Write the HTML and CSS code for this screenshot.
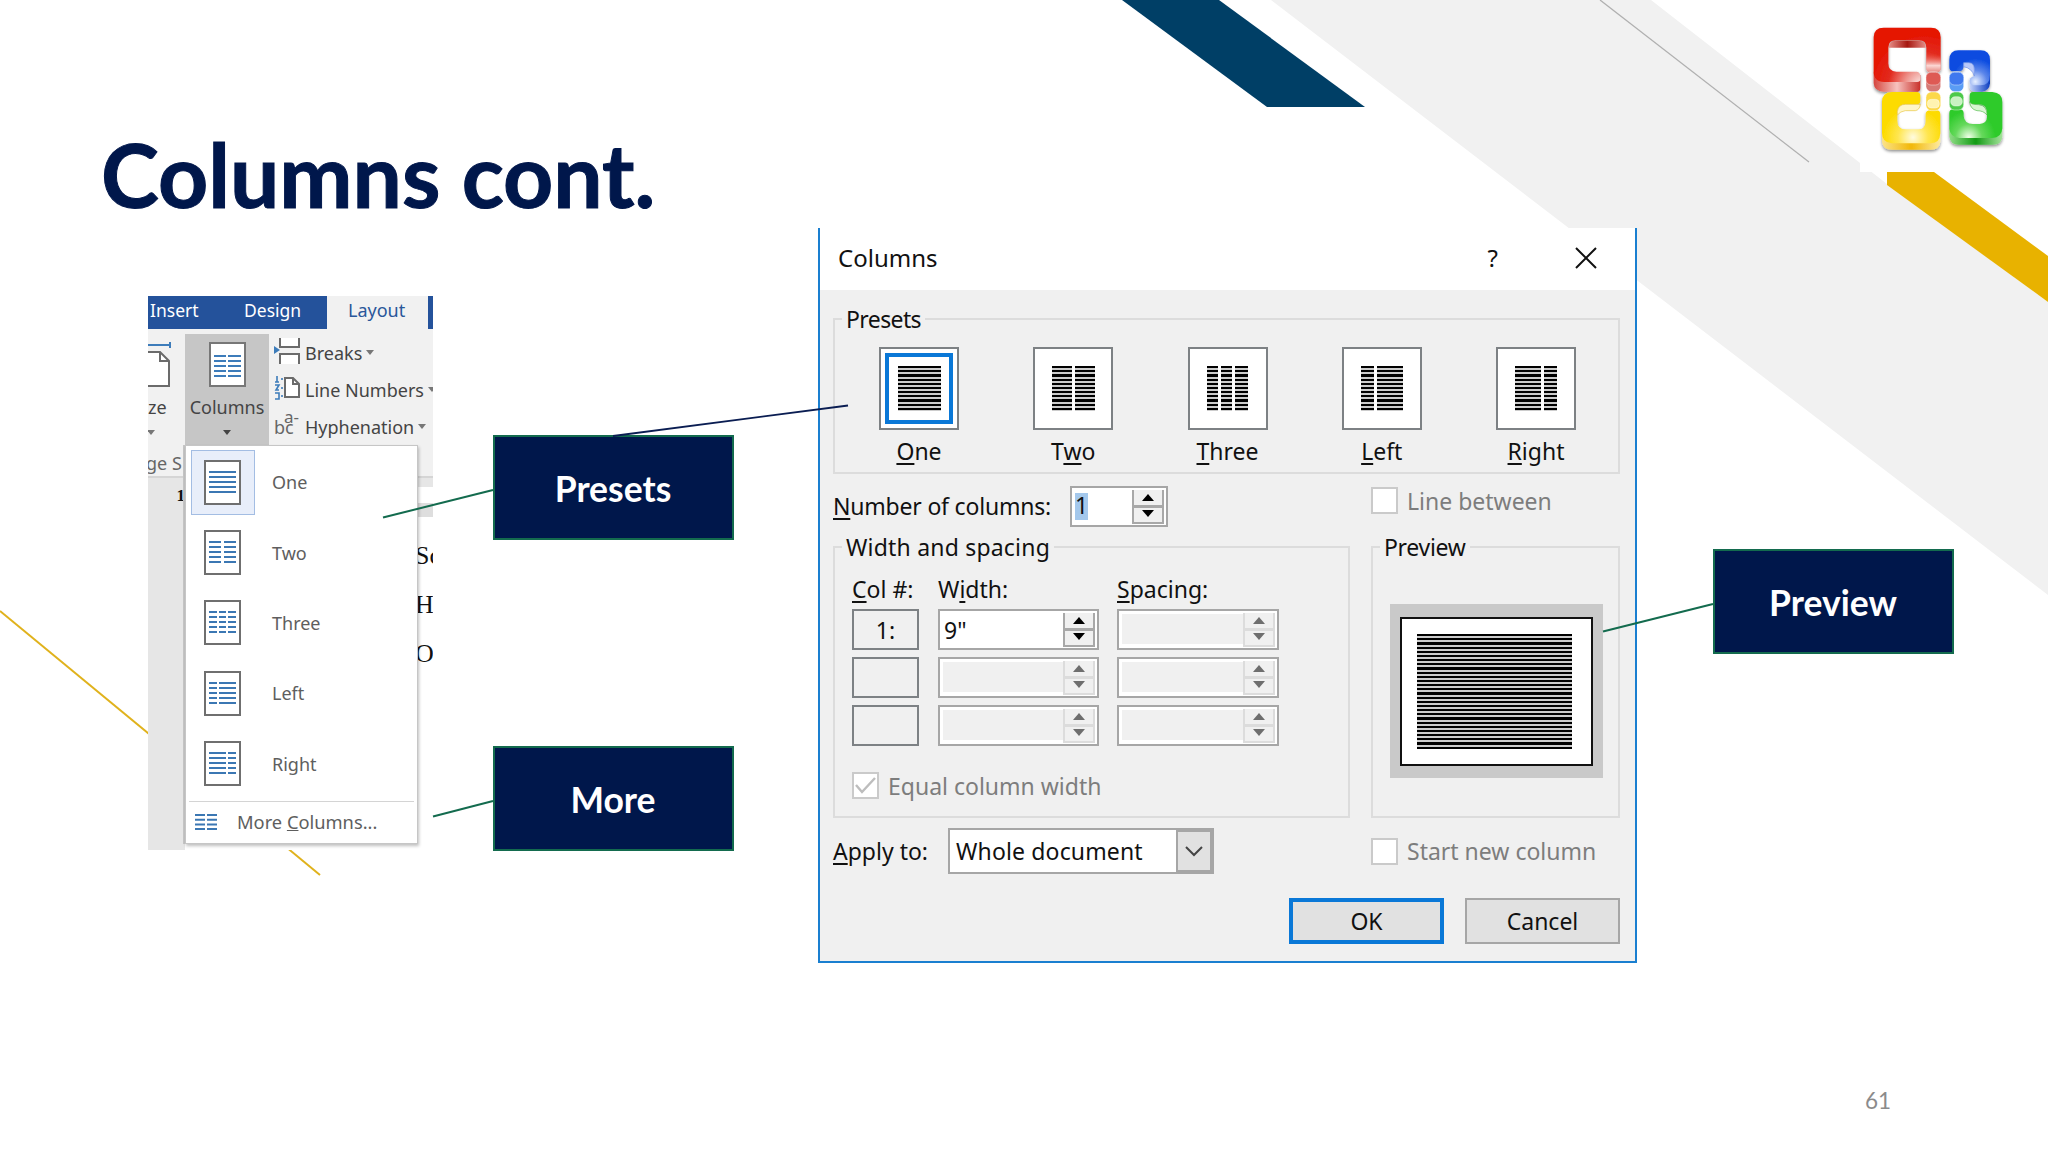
FILE: index.html
```
<!DOCTYPE html>
<html lang="en">
<head>
    <meta charset="UTF-8">
    <meta name="viewport" content="width=device-width, initial-scale=1.0">
    <title>Columns cont.</title>
    <link rel="stylesheet" href="styles.css">
</head>
<body>
<main class="slide">

    <!-- Background shapes -->
    <svg class="layer" viewBox="0 0 2048 1152">
        <polygon fill="#f1f1f1" points="1271,0 1651,0 1887,184 2048,302 2048,595"/>
        <polygon fill="#003f66" points="1122,0 1219,0 1365,107 1267,107"/>
        <rect fill="#fff" x="1860" y="0" width="188" height="172"/>
        <polygon fill="#e8b200" points="1887,172 1934,172 2048,256 2048,302 1887,185"/>
        <line stroke="#b0b0b0" stroke-width="1.3" x1="1600" y1="0" x2="1809" y2="162"/>
        <line stroke="#e0b21c" stroke-width="2" x1="0" y1="611" x2="320" y2="875"/>
    </svg>

    <h1 class="title">Columns cont.</h1>

    <!-- Office logo -->
    <svg class="logo" viewBox="80 60 430 410">
        <defs>
            <radialGradient id="red" gradientUnits="userSpaceOnUse" cx="250" cy="262" r="165">
                <stop offset="0" stop-color="#fff"/><stop offset=".35" stop-color="#ee938c"/><stop offset=".65" stop-color="#e22a1e"/><stop offset="1" stop-color="#e51400"/>
            </radialGradient>
            <radialGradient id="blue" gradientUnits="userSpaceOnUse" cx="405" cy="245" r="70">
                <stop offset="0" stop-color="#e8f0ff"/><stop offset=".5" stop-color="#5c86ea"/><stop offset="1" stop-color="#0a4be0"/>
            </radialGradient>
            <radialGradient id="yellow" gradientUnits="userSpaceOnUse" cx="218" cy="412" r="90">
                <stop offset="0" stop-color="#fffbe0"/><stop offset=".5" stop-color="#ffe650"/><stop offset="1" stop-color="#fddb00"/>
            </radialGradient>
            <radialGradient id="green" gradientUnits="userSpaceOnUse" cx="385" cy="412" r="80">
                <stop offset="0" stop-color="#f0ffe8"/><stop offset=".5" stop-color="#66d95c"/><stop offset="1" stop-color="#2ecb2b"/>
            </radialGradient>
            <linearGradient id="redSide"><stop offset="0" stop-color="#d5463f"/><stop offset=".5" stop-color="#f7c3bf"/><stop offset="1" stop-color="#c9302a"/></linearGradient>
            <linearGradient id="yellowSide"><stop offset="0" stop-color="#fbe38a"/><stop offset=".5" stop-color="#f2b807"/><stop offset="1" stop-color="#fdeaa0"/></linearGradient>
            <linearGradient id="greenSide"><stop offset="0" stop-color="#8fdd85"/><stop offset=".5" stop-color="#129a14"/><stop offset="1" stop-color="#a5e39c"/></linearGradient>
            <linearGradient id="blueSide"><stop offset="0" stop-color="#c6d5fb"/><stop offset="1" stop-color="#0b3cc0"/></linearGradient>
            <linearGradient id="redLip"><stop offset="0" stop-color="#e58a84"/><stop offset=".5" stop-color="#a51710"/><stop offset="1" stop-color="#e58a84"/></linearGradient>
            <linearGradient id="redFade" x2="0" y2="1"><stop offset=".4" stop-color="#e51400" stop-opacity="0"/><stop offset=".8" stop-color="#fbd7d4"/><stop offset="1" stop-color="#e58a84"/></linearGradient>
            <filter id="shadow" x="-10%" y="-10%" width="120%" height="120%"><feDropShadow dx="0" dy="5" stdDeviation="4" flood-opacity=".45"/></filter>
        </defs>
        <g filter="url(#shadow)">
            <!-- sides -->
            <path fill="url(#redSide)" d="M100 215V250Q102 275 130 275H232Q240 275 240 262V225H130Z"/>
            <path fill="url(#yellowSide)" d="M125 395V425Q128 449 155 449H272Q298 449 300 425V395Z"/>
            <path fill="url(#greenSide)" d="M327 385V410Q330 434 355 434H458Q484 434 486 410V385Z"/>
            <path fill="url(#blueSide)" d="M388 235V262Q390 275 405 275H425Q447 272 449 250V225Z"/>
            <!-- faces -->
            <path fill="url(#red)" d="M130 83H272Q301 83 301 112V205Q301 216 290 216H268Q258 216 258 205V143Q258 121 236 121H166Q144 121 144 143V190Q144 215 168 215H230Q240 217 240 228V238Q240 246 230 246H132Q100 246 100 214V112Q100 83 130 83Z"/>
            <path fill="url(#redFade)" d="M258 120H301V205Q301 216 290 216H268Q258 216 258 205Z"/>
            <path fill="url(#blue)" d="M355 151H420Q449 151 449 180V225Q449 256 420 256H400Q388 254 388 242Q389 232 402 228V205Q402 188 385 188H370V200Q368 214 355 214H340Q327 214 327 200V180Q327 151 355 151Z"/>
            <path fill="url(#yellow)" d="M155 276H228Q240 276 240 287V303Q240 313 228 313H195Q171 315 171 335V362Q171 388 197 388H236Q256 386 256 362V342Q257 331 270 331H288Q300 331 300 343V400Q298 430 272 430H155Q125 428 125 398V305Q125 278 155 276Z"/>
            <path fill="url(#green)" d="M398 276H456Q486 278 486 306V385Q484 414 456 414H357Q329 412 327 385V340Q327 328 338 328H360Q370 330 370 340V348Q372 372 398 372H418Q440 370 440 350V335Q438 313 415 313H398Q388 312 388 300V287Q388 276 398 276Z"/>
        </g>
        <!-- inner edges -->
        <path fill="url(#redLip)" d="M146 143Q146 122 166 122H236Q256 122 256 143Z"/>
        <path fill="#fff6c8" stroke="#e8c640" stroke-width="2" d="M171 335Q174 313 195 313H240Q238 330 225 332H195Q180 334 171 345Z"/>
        <path fill="#d9f5d2" stroke="#53bd4c" stroke-width="2" d="M388 305Q390 314 415 314Q440 316 440 345Q430 332 410 332Q390 328 388 305Z"/>
        <path fill="#b9c9fa" stroke="#6a8fea" stroke-width="2" d="M370 200V188H385Q402 188 402 210V228Q395 205 370 200Z"/>
        <!-- small beads -->
        <g stroke="#fff" stroke-opacity=".6" stroke-width="2">
            <rect fill="#d67a76" x="257" y="215" width="44" height="60" rx="16"/>
            <rect fill="#de5a54" x="257" y="217" width="44" height="38" rx="15"/>
            <rect fill="#5a9cf4" x="327" y="215" width="43" height="60" rx="16"/>
            <rect fill="#3f78ee" x="327" y="217" width="43" height="38" rx="15"/>
            <rect fill="#fcd84a" x="257" y="276" width="44" height="56" rx="16"/>
            <rect fill="#fff3b0" x="261" y="298" width="36" height="26" rx="12"/>
            <rect fill="#4cc94a" x="327" y="276" width="43" height="54" rx="16"/>
            <rect fill="#c9f2c2" x="331" y="290" width="35" height="28" rx="13"/>
        </g>
    </svg>

    <!-- Word ribbon with the Columns menu open -->
    <section class="word">
        <nav class="tabs">
            <span class="tab insert">Insert</span>
            <span class="tab design">Design</span>
            <span class="tab layout">Layout</span>
        </nav>
        <div class="ribbon">
            <div class="size">
                <svg width="24" height="46" viewBox="0 0 24 46">
                    <path d="M0 4H22M22 1V7" stroke="#3d7cba" stroke-width="2" fill="none"/>
                    <path d="M0 11H12L21 20V45H0" fill="#fff" stroke="#6b6b6b" stroke-width="2"/>
                    <path d="M12 11V20H21" fill="none" stroke="#6b6b6b" stroke-width="2"/>
                </svg>
                <span>ze</span>
                <i class="caret"></i>
                <span class="group-name">ge S</span>
            </div>
            <div class="columns-btn">
                <svg width="37" height="45" viewBox="0 0 37 45">
                    <rect x="1" y="1" width="35" height="43" fill="#fff" stroke="#777" stroke-width="2"/>
                    <path d="M5 14H17M19 14H32M5 19H17M19 19H32M5 24H17M19 24H32M5 29H17M19 29H32M5 34H17M19 34H32" stroke="#3d7cba" stroke-width="2"/>
                </svg>
                <span>Columns</span>
                <i class="caret dark"></i>
            </div>
            <ul class="tools">
                <li>
                    <svg width="27" height="26" viewBox="0 0 27 26">
                        <path d="M6 0V9H25V0M6 26V16H25V26" fill="#fff" stroke="#6b6b6b" stroke-width="2"/>
                        <path d="M0 8L6 12L0 16Z" fill="#3d7cba"/>
                    </svg>
                    Breaks<i class="caret"></i>
                </li>
                <li>
                    <svg width="27" height="26" viewBox="0 0 27 26">
                        <path d="M11 3H19L25 9V22H11Z" fill="#fff" stroke="#6b6b6b" stroke-width="2"/>
                        <path d="M19 3V9H25" fill="none" stroke="#6b6b6b" stroke-width="2"/>
                        <path d="M3 1V7M1 7H5M1 10H5L2 15H5M1 18H5V24H1M8 3V5M8 12V14M8 20V22" fill="none" stroke="#3d7cba" stroke-width="1.6"/>
                    </svg>
                    Line Numbers<i class="caret"></i>
                </li>
                <li>
                    <span class="hyphen"><sup>a-</sup>bc</span>
                    Hyphenation<i class="caret"></i>
                </li>
            </ul>
        </div>
        <div class="document">
            <div class="margin">1</div>
            <div class="ruler"></div>
            <div class="page"><p>Sc</p><p>H</p><p>O</p></div>
        </div>

        <ul class="menu">
            <li>
                <span class="pick selected"><svg width="37" height="45" viewBox="0 0 37 45"><rect class="sheet" x="1" y="1" width="35" height="43"/><path class="lines" d="M5 12H32M5 17H32M5 22H32M5 27H32M5 32H32"/></svg></span>One
            </li>
            <li>
                <span class="pick"><svg width="37" height="45" viewBox="0 0 37 45"><rect class="sheet" x="1" y="1" width="35" height="43"/><path class="lines" d="M5 12H17M20 12H32M5 17H17M20 17H32M5 22H17M20 22H32M5 27H17M20 27H32M5 32H17M20 32H32"/></svg></span>Two
            </li>
            <li>
                <span class="pick"><svg width="37" height="45" viewBox="0 0 37 45"><rect class="sheet" x="1" y="1" width="35" height="43"/><path class="lines" d="M5 12H13M15 12H22M24 12H32M5 17H13M15 17H22M24 17H32M5 22H13M15 22H22M24 22H32M5 27H13M15 27H22M24 27H32M5 32H13M15 32H22M24 32H32"/></svg></span>Three
            </li>
            <li>
                <span class="pick"><svg width="37" height="45" viewBox="0 0 37 45"><rect class="sheet" x="1" y="1" width="35" height="43"/><path class="lines" d="M5 12H13M15 12H32M5 17H13M15 17H32M5 22H13M15 22H32M5 27H13M15 27H32M5 32H13M15 32H32"/></svg></span>Left
            </li>
            <li>
                <span class="pick"><svg width="37" height="45" viewBox="0 0 37 45"><rect class="sheet" x="1" y="1" width="35" height="43"/><path class="lines" d="M5 12H22M24 12H32M5 17H22M24 17H32M5 22H22M24 22H32M5 27H22M24 27H32M5 32H22M24 32H32"/></svg></span>Right
            </li>
            <li class="more">
                <svg width="22" height="18" viewBox="0 0 22 18"><path class="lines" d="M0 2H10M12 2H22M0 6.7H10M12 6.7H22M0 11.4H10M12 11.4H22M0 16H10M12 16H22"/></svg>
                <span>More <u>C</u>olumns...</span>
            </li>
        </ul>
    </section>

    <!-- Columns dialog -->
    <section class="dialog">
        <header class="titlebar">
            <span>Columns</span>
            <span class="help">?</span>
            <svg width="22" height="22" viewBox="0 0 22 22"><path d="M1 1L21 21M21 1L1 21" stroke="#111" stroke-width="2"/></svg>
        </header>
        <div class="content">
            <fieldset class="presets">
                <legend>Presets</legend>
                <div class="preset">
                    <span class="thumb active"><i class="bars w43"></i></span>
                    <span><u>O</u>ne</span>
                </div>
                <div class="preset">
                    <span class="thumb"><i class="bars w20"></i><i class="bars w20"></i></span>
                    <span>T<u>w</u>o</span>
                </div>
                <div class="preset">
                    <span class="thumb"><i class="bars w11"></i><i class="bars w11"></i><i class="bars w13"></i></span>
                    <span><u>T</u>hree</span>
                </div>
                <div class="preset">
                    <span class="thumb"><i class="bars w13"></i><i class="bars w26"></i></span>
                    <span><u>L</u>eft</span>
                </div>
                <div class="preset">
                    <span class="thumb"><i class="bars w26"></i><i class="bars w13"></i></span>
                    <span><u>R</u>ight</span>
                </div>
            </fieldset>

            <div class="number-row">
                <span class="number-label"><u>N</u>umber of columns:</span>
                <span class="field number"><mark>1</mark><span class="spin"><i class="up"></i><i class="down"></i></span></span>
                <span class="check"><i class="box"></i>Line between</span>
            </div>

            <div class="groups">
                <fieldset class="spacing">
                    <legend>Width and spacing</legend>
                    <div class="grid">
                        <span><u>C</u>ol #:</span><span>W<u>i</u>dth:</span><span><u>S</u>pacing:</span>

                        <span class="col">1:</span>
                        <span class="field">9"<span class="spin"><i class="up"></i><i class="down"></i></span></span>
                        <span class="field off"><span class="spin"><i class="up"></i><i class="down"></i></span></span>

                        <span class="col"></span>
                        <span class="field off"><span class="spin"><i class="up"></i><i class="down"></i></span></span>
                        <span class="field off"><span class="spin"><i class="up"></i><i class="down"></i></span></span>

                        <span class="col"></span>
                        <span class="field off"><span class="spin"><i class="up"></i><i class="down"></i></span></span>
                        <span class="field off"><span class="spin"><i class="up"></i><i class="down"></i></span></span>
                    </div>
                    <span class="check">
                        <i class="box"><svg width="23" height="23" viewBox="0 0 23 23"><path d="M2 11L8 18L21 4" fill="none" stroke="#bdbdbd" stroke-width="2.4"/></svg></i>Equal column width
                    </span>
                </fieldset>
                <fieldset class="preview">
                    <legend>Preview</legend>
                    <div class="desk"><div class="paper"><div class="bars"></div></div></div>
                </fieldset>
            </div>

            <div class="apply-row">
                <span class="apply-label"><u>A</u>pply to:</span>
                <span class="select">Whole document
                    <span class="arrow"><svg width="18" height="12" viewBox="0 0 18 12"><path d="M1 2L9 10L17 2" fill="none" stroke="#444" stroke-width="2"/></svg></span>
                </span>
                <span class="check"><i class="box"></i>Start new column</span>
            </div>

            <div class="buttons">
                <span class="btn ok">OK</span>
                <span class="btn">Cancel</span>
            </div>
        </div>
    </section>

    <!-- Callouts and their connectors -->
    <div class="callout presets-callout">Presets</div>
    <div class="callout more-callout">More</div>
    <div class="callout preview-callout">Preview</div>
    <svg class="layer" viewBox="0 0 2048 1152">
        <g stroke="#136b4e" stroke-width="2">
            <line x1="383" y1="517.500" x2="493" y2="490"/>
            <line x1="433" y1="816.500" x2="493" y2="801"/>
            <line x1="1603" y1="631.500" x2="1713" y2="604"/>
        </g>
        <line stroke="#0a1d52" stroke-width="1.800" x1="613" y1="436" x2="848" y2="405.500"/>
    </svg>

    <span class="page-number">61</span>
</main>
</body>
</html>
```
FILE: styles.css
```
* {
    box-sizing: border-box;
}
body {
    margin: 0;
    background: #fff;
}
ul {
    list-style: none;
    margin: 0;
    padding: 0;
}
svg {
    display: block;
    flex: none;
}
.slide {
    position: relative;
    width: 2048px;
    height: 1152px;
    overflow: hidden;
    font-family: "Noto Sans", sans-serif;
}
.layer {
    position: absolute;
    left: 0;
    top: 0;
    width: 2048px;
    height: 1152px;
}
.title {
    position: absolute;
    left: 101px;
    top: 123px;
    margin: 0;
    font: bold 87.5px/104px Lato, sans-serif;
    color: #00174b;
    white-space: nowrap;
    -webkit-text-stroke: 1px #00174b; /* slightly heavier than Lato Bold */
}
.logo {
    position: absolute;
    left: 1866.67px;
    top: 20px;
    width: 143.33px;
    height: 136.67px;
}
.page-number {
    position: absolute;
    left: 1865px;
    top: 1087px;
    font: 22.5px/28px Lato, sans-serif;
    color: #8b8b8b;
}

/* Callouts */
.callout {
    position: absolute;
    width: 241px;
    height: 105px;
    display: flex;
    align-items: center;
    justify-content: center;
    background: #00174b;
    border: 2px solid #136b4e;
    color: #fff;
    font: bold 35.5px/42px Lato, sans-serif;
    padding: 3px 1px 0 0;
}
.presets-callout {
    left: 493px;
    top: 435px;
}
.more-callout {
    left: 493px;
    top: 746px;
}
.preview-callout {
    left: 1713px;
    top: 549px;
}

/* Word ribbon */
.word {
    position: absolute;
    left: 148px;
    top: 296px;
    width: 285px;
    height: 554px;
    overflow: hidden;
    background: #fff;
    font-size: 18px;
    line-height: 20px;
    color: #444;
}
.tabs {
    display: flex;
    height: 33px;
    background: #24529b;
    color: #fff;
}
.tab {
    height: 33px;
    padding-top: 4px;
}
.insert {
    width: 81px;
    padding-left: 2px;
    font-size: 17.5px;
}
.design {
    width: 98px;
    padding-left: 15px;
    font-size: 17.5px;
}
.layout {
    width: 101px;
    padding-left: 21px;
    background: #f1f1f1;
    color: #2a579a;
}
.ribbon {
    display: flex;
    height: 149px;
    background: #f1f1f1;
    border-bottom: 2px solid #d5d5d5;
}
.size {
    flex: none;
    width: 37px;
    padding-top: 12px;
    display: flex;
    flex-direction: column;
}
.size span {
    margin-top: 10px;
    white-space: nowrap;
}
.size .caret {
    margin: 13px 0 0 -1px;
}
.size .group-name {
    margin: 18px 0 0 -2px;
    color: #666;
}
.columns-btn {
    flex: none;
    width: 84px;
    height: 112px;
    margin-top: 5px;
    padding-top: 8px;
    background: #c6c6c6;
    display: flex;
    flex-direction: column;
    align-items: center;
}
.columns-btn span {
    margin-top: 10px;
}
.columns-btn .caret {
    margin-top: 13px;
}
.caret {
    display: inline-block;
    border: 4px solid transparent;
    border-top: 5px solid #777;
    border-bottom: 0;
    width: 8px;
}
.caret.dark {
    border-top-color: #444;
}
.tools {
    padding: 10px 0 0 5px;
}
.tools li {
    display: flex;
    align-items: center;
    height: 37px;
    padding-bottom: 10px;
    gap: 4px;
    white-space: nowrap;
}
.tools svg,
.hyphen {
    width: 27px;
    flex: none;
}
.tools svg {
    margin-bottom: 3px;
}
.hyphen {
    position: relative;
    color: #666;
}
.hyphen sup {
    position: absolute;
    left: 10px;
    top: -10px;
    font-size: 17px;
    line-height: 20px;
}
.document {
    display: flex;
    position: relative;
    height: 372px;
    font-family: "Liberation Serif", serif;
    font-size: 26px;
    color: #111;
}
.margin {
    width: 37px;
    flex: none;
    background: #e6e6e6;
    padding: 8px 0 0;
    text-align: right;
    font: bold 17px/20px "Liberation Serif", serif;
}
.ruler {
    position: absolute;
    left: 269px;
    top: 0;
    width: 16px;
    height: 39px;
    background: linear-gradient(#e6e6e6 9px, #fff 9px 25px, #dedede 25px);
}
.page {
    margin-left: 230px;
    padding-top: 66px;
}
.page p {
    margin: 0 0 25px;
    line-height: 24px;
}

/* Columns drop-down */
.menu {
    position: absolute;
    left: 37px;
    top: 149px;
    width: 233px;
    height: 399px;
    padding: 1px 3px 0;
    background: #fff;
    border: 1px solid #c6c6c6;
    box-shadow: 1px 2px 3px rgba(0, 0, 0, .25), -2px 0 0 #c6c6c6;
    color: #5e5e5e;
}
.menu li {
    display: flex;
    align-items: center;
    height: 70.4px;
    gap: 17px;
    padding-left: 2px;
}
.pick {
    width: 64px;
    height: 65px;
    padding: 10px 13px;
}
.pick.selected {
    background: #e8eefa;
    border: 1px solid #a3bde3;
    padding: 9px 12px;
}
.sheet {
    fill: #fff;
    stroke: #6f6f6f;
    stroke-width: 2;
}
.lines {
    fill: none;
    stroke: #3b77b3;
    stroke-width: 2;
}
.menu .more {
    height: 41px;
    margin-top: 2px;
    padding: 1px 0 0 6px;
    gap: 20px;
    border-top: 1px solid #d4d4d4;
    font-size: 18.3px;
}

/* Dialog */
.dialog {
    position: absolute;
    left: 818px;
    top: 228px;
    width: 819px;
    height: 735px;
    background: #f0f0f0;
    border: 2px solid #1a7fd0;
    border-top: 0;
    font-size: 23px;
    line-height: 24px;
    color: #111;
}
.dialog u {
    text-decoration-thickness: 2px;
    text-underline-offset: 3px;
}
.titlebar {
    display: flex;
    align-items: center;
    height: 62px;
    padding: 0 38px 3px 18px;
    background: #fff;
    font-size: 24px;
}
.help {
    margin: 0 77px 0 auto;
}
.content {
    padding: 17px 14px 0 13px;
}
fieldset {
    margin: 0;
    padding: 0 7px;
    border: 2px solid #dcdcdc;
    min-width: 0;
}
legend {
    padding: 0 4px;
    height: 24px;
    line-height: 25px;
}
.presets {
    display: flex;
    justify-content: space-between;
    width: 787px;
    height: 167px;
    padding: 16px 42px 0 44px;
}
.presets legend {
    margin-left: -37px;
    letter-spacing: -.6px;
}
.preset {
    display: flex;
    flex-direction: column;
    align-items: center;
    width: 80px;
    gap: 9px;
}
.thumb {
    display: flex;
    align-items: center;
    justify-content: center;
    gap: 3px;
    width: 80px;
    height: 83px;
    background: #fff;
    border: 2px solid #7d8184;
}
.thumb .bars {
    height: 45px;
}
.thumb.active {
    box-shadow: inset 0 0 0 4px #fff, inset 0 0 0 8px #0a78d7;
}
/* six text lines in every 25px */
.bars {
    background: repeating-linear-gradient(
        #000 0 2px, #ccc 2px 4px,
        #000 4px 6px, #ccc 6px 8px,
        #000 8px 11px, #ccc 11px 13px,
        #000 13px 15px, #ccc 15px 17px,
        #000 17px 19px, #ccc 19px 21px,
        #000 21px 23px, #ccc 23px 25px
    );
}
.w11 {
    width: 11px;
}
.w13 {
    width: 13px;
}
.w20 {
    width: 20px;
}
.w26 {
    width: 26px;
}
.w43 {
    width: 43px;
}
.number-row {
    display: flex;
    align-items: flex-start;
    height: 61px;
    padding-top: 12px;
}
.number-label {
    width: 237px;
    padding-top: 8px;
    letter-spacing: -.2px;
}
.field {
    display: flex;
    align-items: center;
    height: 41px;
    padding: 1px 2px 1px 4px;
    background: #fff;
    border: 2px solid #a6a6a6;
}
.field.off {
    background: linear-gradient(#f0f0f0, #f0f0f0) 3px 3px / 121px 30px no-repeat #fff;
}
.number {
    width: 98px;
    margin-right: 203px;
    padding-left: 3px;
}
.number mark {
    width: 13px;
    height: 27px;
    background: #a4c8ec;
    color: #111;
}
.spin {
    display: flex;
    flex-direction: column;
    justify-content: space-between;
    align-items: center;
    width: 32px;
    height: 34px;
    margin-left: auto;
    padding: 4px 0 5px;
    background: linear-gradient(#f0f0f0 15px, #a8a8a8 15px 18px, #f0f0f0 18px);
    border: 2px solid #a8a8a8;
    border-top: 0;
}
.off .spin {
    background: linear-gradient(#f0f0f0 15px, #dcdcdc 15px 18px, #f0f0f0 18px);
    border-color: #dcdcdc;
}
.up,
.down {
    border: 6px solid transparent;
    width: 0;
}
.up {
    border-top: 0;
    border-bottom: 7px solid #000;
}
.down {
    border-bottom: 0;
    border-top: 7px solid #000;
}
.off .up {
    border-bottom-color: #6e6e6e;
}
.off .down {
    border-top-color: #6e6e6e;
}
.check {
    display: flex;
    align-items: center;
    gap: 9px;
    color: #7d7d7d;
    white-space: nowrap;
}
.number-row .check {
    margin-top: 1px;
}
.box {
    width: 27px;
    height: 27px;
    background: #fff;
    border: 2px solid #cacaca;
}
.groups {
    display: flex;
    gap: 21px;
}
.spacing {
    width: 517px;
    height: 283px;
    padding: 17px 17px 0;
}
.preview {
    width: 249px;
    height: 283px;
    padding: 45px 14px 0 17px;
}
.spacing legend {
    margin-left: -10px;
    letter-spacing: .2px;
}
.preview legend {
    margin-left: -10px;
    letter-spacing: -.3px;
}
.grid {
    display: grid;
    grid-template-columns: 67px 161px 162px;
    grid-template-rows: 26px 41px 41px 41px;
    gap: 7px 19px;
}
.grid > :nth-child(-n+3) {
    padding-top: 1px;
}
.grid > :nth-child(3n) {
    margin: 0 1px 0 -1px;
}
.col {
    display: flex;
    align-items: center;
    justify-content: center;
    border: 2px solid #7d8184;
}
.spacing .check {
    margin-top: 26px;
}
.desk {
    width: 213px;
    height: 174px;
    padding: 13px 10px 12px;
    background: #c9c9c9;
}
.paper {
    height: 149px;
    padding: 15px 19px 0 15px;
    background: #fff;
    border: 2px solid #111;
}
.paper .bars {
    height: 115px;
}
.apply-row {
    display: flex;
    align-items: center;
    height: 46px;
    margin-top: 10px;
}
.apply-label {
    width: 115px;
}
.select {
    display: flex;
    align-items: center;
    justify-content: space-between;
    width: 266px;
    height: 46px;
    margin-right: 157px;
    padding-left: 6px;
    background: #fff;
    border: 2px solid #a6a6a6;
    letter-spacing: .15px;
}
.arrow {
    display: flex;
    align-items: center;
    justify-content: center;
    width: 36px;
    height: 42px;
    background: #e1e1e1;
    border: 2px solid #a6a6a6;
}
.buttons {
    display: flex;
    justify-content: flex-end;
    gap: 21px;
    margin: 24px 1px 0 0;
}
.btn {
    display: flex;
    align-items: center;
    justify-content: center;
    width: 155px;
    height: 46px;
    background: #e1e1e1;
    border: 2px solid #a6a6a6;
}
.ok {
    border: 4px solid #0a78d7;
}
```
